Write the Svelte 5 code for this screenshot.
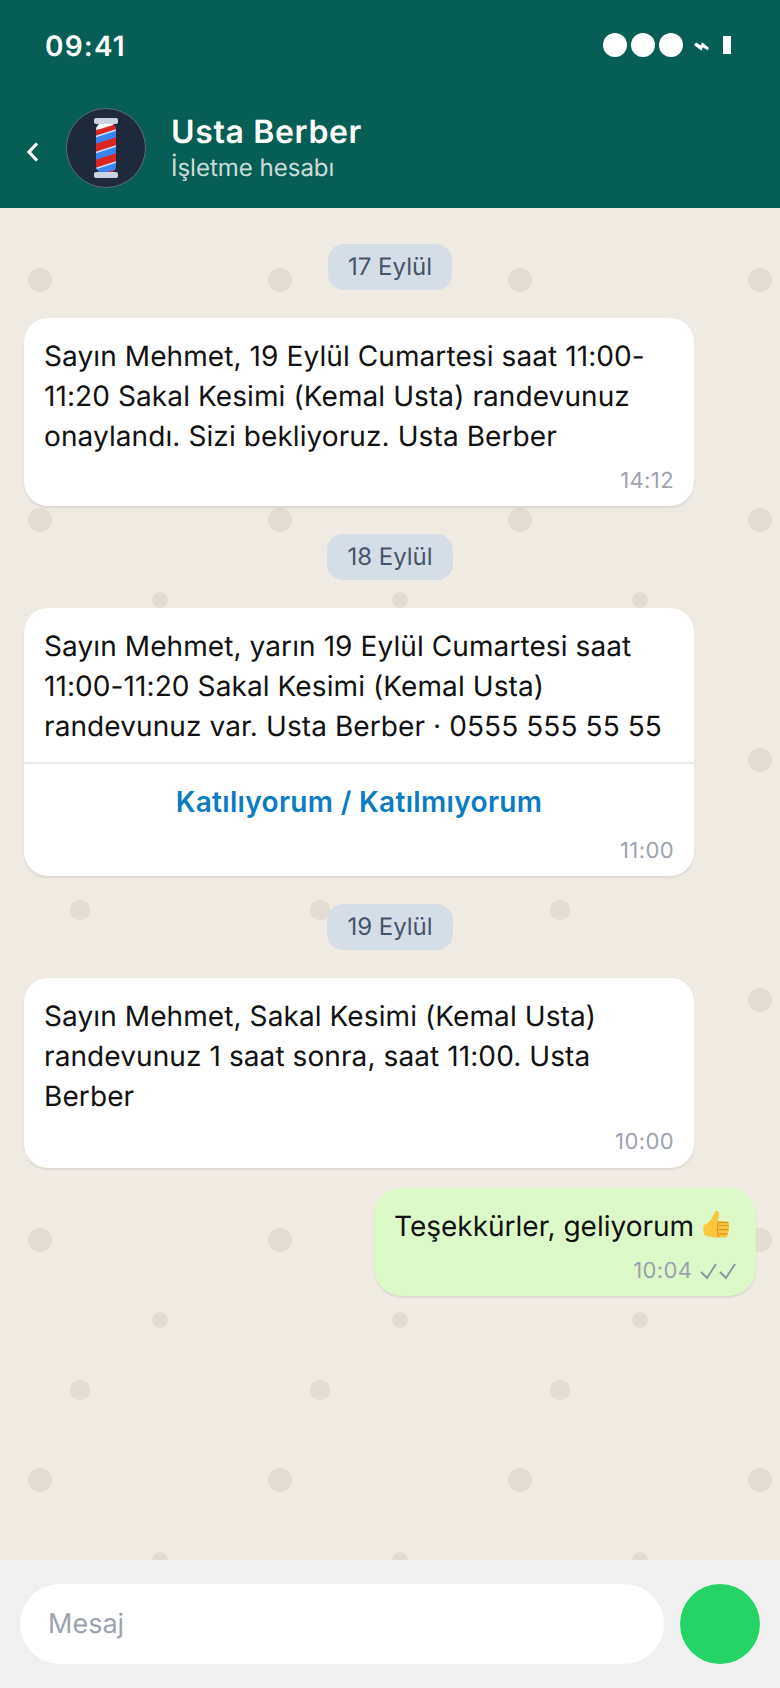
<script>
  const days = [
    {
      date: "17 Eylül",
      text: "Sayın Mehmet, 19 Eylül Cumartesi saat 11:00-11:20 Sakal Kesimi (Kemal Usta) randevunuz onaylandı. Sizi bekliyoruz. Usta Berber",
      time: "14:12"
    },
    {
      date: "18 Eylül",
      text: "Sayın Mehmet, yarın 19 Eylül Cumartesi saat 11:00-11:20 Sakal Kesimi (Kemal Usta) randevunuz var. Usta Berber · 0555 555 55 55",
      action: "Katılıyorum / Katılmıyorum",
      time: "11:00"
    },
    {
      date: "19 Eylül",
      text: "Sayın Mehmet, Sakal Kesimi (Kemal Usta) randevunuz 1 saat sonra, saat 11:00. Usta Berber",
      time: "10:00",
      last: true
    }
  ];
</script>

<main class="phone">
  <header class="top">
    <div class="status">
      <span class="clock">09:41</span>
      <div class="indicators">
        <span class="dot"></span>
        <span class="dot"></span>
        <span class="dot"></span>
        <svg class="bolt" viewBox="0 0 15 9" aria-hidden="true">
          <path d="M0 3 2 .5 7 3.500 8 .3 15 6 13.500 8.200 8.800 5.200 7.600 8.700Z" fill="#fff" />
        </svg>
        <span class="battery"></span>
      </div>
    </div>
    <div class="contact">
      <svg class="back" viewBox="0 0 13 20" aria-hidden="true">
        <path d="M11 1.500 3 10l8 8.500" fill="none" stroke="#fff" stroke-width="3.200" />
      </svg>
      <svg class="avatar" viewBox="0 0 80 80" aria-hidden="true">
        <defs>
          <clipPath id="pole"><rect x="30" y="15" width="20" height="50" rx="7" /></clipPath>
        </defs>
        <circle cx="40" cy="40" r="39.500" fill="#1e293b" stroke="#5d6b78" />
        <g clip-path="url(#pole)">
          <rect x="29" y="14" width="22" height="52" fill="#3b82f6" />
          <path d="M29 20 51 13V21L29 28ZM29 36 51 29V37L29 44ZM29 52 51 45V53L29 60ZM29 68 51 61V69L29 76Z" fill="#dc2626" />
          <path d="M29 28 51 21V22.500L29 29.500ZM29 44 51 37V38.500L29 45.500ZM29 60 51 53V54.500L29 61.500Z" fill="#dbe4f0" />
          <path d="M30 15H50V16L36 20.500 30 22Z" fill="#fff" />
        </g>
        <rect x="28" y="10" width="24" height="6" rx="2" fill="#cbd5e1" />
        <rect x="28" y="64" width="24" height="6" rx="2" fill="#cbd5e1" />
      </svg>
      <div class="who">
        <h1>Usta Berber</h1>
        <p>İşletme hesabı</p>
      </div>
    </div>
  </header>

  <section class="chat">
    {#each days as day}
      <div class="pill">{day.date}</div>
      <article class="bubble" class:last={day.last}>
        <p class="text">{day.text}</p>
        {#if day.action}
          <button class="action">{day.action}</button>
        {/if}
        <div class="meta">{day.time}</div>
      </article>
    {/each}

    <article class="bubble mine">
      <p class="text">
        Teşekkürler, geliyorum
        <svg class="thumb" viewBox="0 0 30 32" aria-hidden="true">
          <path d="M2 16C5 15 9 12 11 8 12.500 5.500 13.500 3 14 1.800 15 .2 17.500 .6 18 3 18.500 6 17.500 9.500 17 12H26C28.500 12 29.500 14 28.800 16 29.800 17.500 29.500 19.500 28.500 20.500 29 22 28.500 24 27.500 25 27.800 27.500 26.500 29.500 24.500 29.500H15C11 29.500 9 28 6 28 3 28 1.500 26 1.500 22 1.500 19.500 1.500 17.500 2 16Z" fill="#fcc63a" />
          <path d="M17 12.500C20 13.500 24 13 28 13.500M18 16.500H28.500M18 21H28.500M18 25.500H27.500M18 13C16 17 16.500 24 18 29" stroke="#e2922a" stroke-width="1.200" fill="none" />
        </svg>
      </p>
      <div class="meta">
        10:04
        <svg class="ticks" viewBox="0 0 36 20" aria-hidden="true">
          <path d="M1 11 7 17 16 3M20 11 26 17 35 3" fill="none" stroke="#8a93a0" stroke-width="1.800" />
        </svg>
      </div>
    </article>
  </section>

  <footer class="composer">
    <div class="field">Mesaj</div>
    <button class="send" aria-label="Gönder"></button>
  </footer>
</main>

<style>
  :global(body) {
    margin: 0;
  }

  .phone {
    width: 780px;
    height: 1688px;
    display: flex;
    flex-direction: column;
    font-family: Inter, "Noto Sans", sans-serif;
    text-rendering: geometricPrecision;
    overflow: hidden;
  }

  .top {
    height: 208px;
    box-sizing: border-box;
    background: #075e54;
    color: #fff;
    padding-right: 20px;
    display: flex;
    flex-direction: column;
  }

  .status {
    height: 108px;
    padding: 30px 0 0 45px;
    box-sizing: border-box;
    display: flex;
    justify-content: space-between;
    align-items: flex-start;
  }

  .clock {
    font-size: 28px;
    line-height: 32px;
    font-weight: 600;
    letter-spacing: 1.200px;
  }

  .indicators {
    display: flex;
    align-items: center;
    gap: 4px;
    margin: 3px 29px 0 0;
  }

  .dot {
    width: 24px;
    height: 24px;
    border-radius: 50%;
    background: #fff;
  }

  .bolt {
    width: 15px;
    height: 9px;
    margin: 2px 10px 0 7px;
  }

  .battery {
    width: 8px;
    height: 18px;
    background: #fff;
  }

  .contact {
    display: flex;
    align-items: center;
    padding-left: 26px;
  }

  .back {
    width: 13px;
    height: 20px;
    margin: 8px 27px 0 0;
  }

  .avatar {
    width: 80px;
    height: 80px;
  }

  .who {
    margin-left: 25px;
  }

  h1 {
    margin: 0;
    font-size: 32px;
    line-height: 40px;
    font-weight: 600;
    letter-spacing: 0.650px;
  }

  .who p {
    margin: 0;
    font-size: 24px;
    line-height: 32px;
    color: rgba(255, 255, 255, 0.8);
  }

  .chat {
    flex: 1;
    box-sizing: border-box;
    padding: 36px 24px 0;
    display: flex;
    flex-direction: column;
    background-color: #efeae2;
    background-image:
      radial-gradient(circle at 40px 72px, #e2dcd3 11.500px, transparent 12.500px),
      radial-gradient(circle at 160px 152px, #e2dcd3 7.500px, transparent 8.500px),
      radial-gradient(circle at 80px 222px, #e2dcd3 9.500px, transparent 10.500px);
    background-size: 240px 240px;
  }

  .pill {
    align-self: center;
    height: 46px;
    padding: 0 20px;
    border-radius: 16px;
    background: #d5dde7;
    color: #475569;
    font-size: 24px;
    line-height: 46px;
    margin-bottom: 28px;
  }

  .bubble {
    width: 670px;
    box-sizing: border-box;
    background: #fff;
    border-radius: 24px;
    box-shadow: 0 2px 2px rgba(0, 0, 0, 0.08);
    padding: 18px 0 11px;
    margin-bottom: 28px;
  }

  .bubble.last {
    padding-bottom: 12px;
    margin-bottom: 20px;
  }

  .bubble.last .meta {
    margin-top: 12px;
  }

  .text {
    margin: 0;
    padding: 0 20px;
    font-size: 28px;
    line-height: 40px;
    color: #111;
    letter-spacing: 0.090px;
  }

  .action {
    display: block;
    width: 100%;
    margin-top: 16px;
    padding: 18px 0 0;
    border: 0;
    border-top: 2px solid #e8e8e8;
    background: none;
    color: #0a7cc4;
    font: 600 28px/40px Inter, sans-serif;
    letter-spacing: 0.330px;
  }

  .meta {
    margin-top: 11px;
    padding: 0 20px;
    font-size: 22px;
    line-height: 28px;
    color: #9ca3af;
    text-align: right;
    letter-spacing: 0.400px;
  }

  .action + .meta {
    margin-top: 15px;
  }

  .mine {
    width: 382px;
    align-self: flex-end;
    background: #dcf8c6;
    border-radius: 28px;
  }

  .mine .text {
    letter-spacing: 0;
  }

  .thumb {
    width: 28px;
    height: 30px;
    vertical-align: -4px;
  }

  .ticks {
    width: 36px;
    height: 20px;
    vertical-align: -3px;
    margin-left: 1px;
  }

  .composer {
    height: 128px;
    box-sizing: border-box;
    background: #f0f0f0;
    padding: 24px 20px;
    display: flex;
    gap: 16px;
  }

  .field {
    flex: 1;
    background: #fff;
    border-radius: 40px;
    padding-left: 28px;
    color: #9ca3af;
    font-size: 27px;
    line-height: 80px;
  }

  .send {
    width: 80px;
    height: 80px;
    padding: 0;
    border: 0;
    border-radius: 50%;
    background: #25d366;
  }
</style>
